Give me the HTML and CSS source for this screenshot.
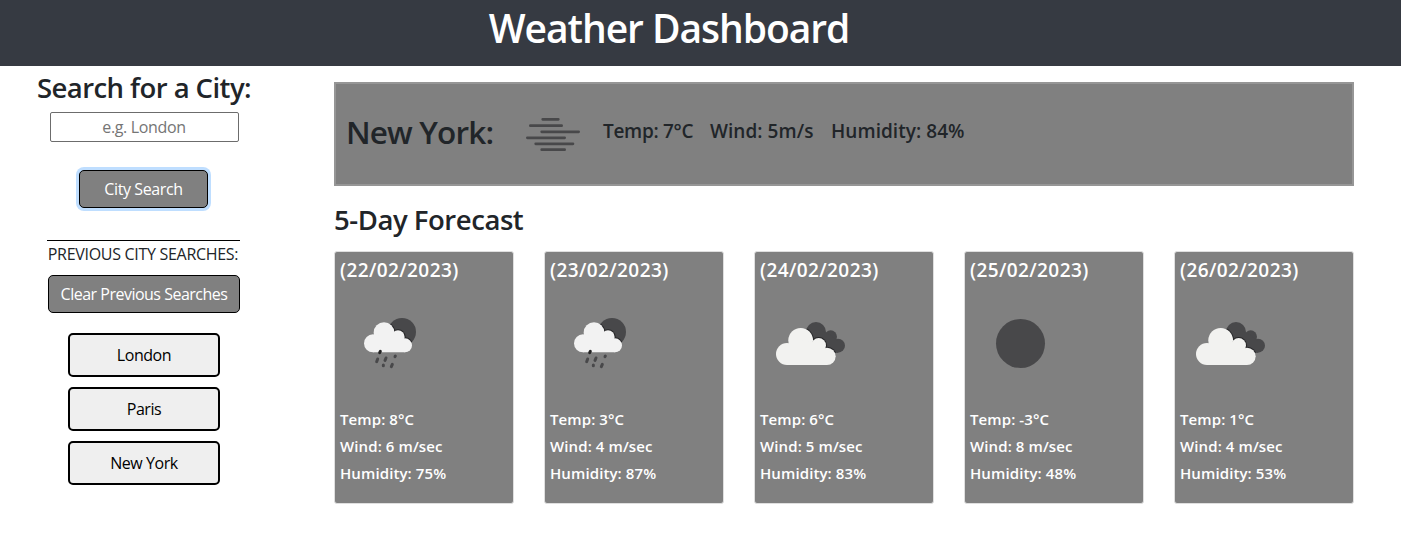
FILE: index.html
```html
<!DOCTYPE html>
<html lang="en">
<head>
<meta charset="utf-8">
<title>Weather Dashboard</title>
<link rel="stylesheet" href="styles.css">
</head>
<body>
<svg class="defs" aria-hidden="true">
  <clipPath id="sun-clip"><circle cx="156" cy="81" r="42"/></clipPath>
  <clipPath id="back-clip"><path d="M108 81a30 30 0 0 1 60 0a19 19 0 0 1 31 21a21 21 0 1 1 5 41h-34l-62-40z"/></clipPath>
  <symbol id="rain" viewBox="0 0 240 225">
    <circle cx="156" cy="81" r="42" fill="#48484a"/>
    <g fill="#262628" clip-path="url(#sun-clip)">
      <circle cx="102" cy="83" r="34"/><circle cx="144" cy="96" r="23"/><circle cx="165" cy="121" r="24"/>
    </g>
    <g fill="#f2f2f2">
      <circle cx="69" cy="115" r="27"/><circle cx="102" cy="83" r="31"/><circle cx="144" cy="96" r="20"/><circle cx="165" cy="121" r="21"/>
      <path d="M69 142V100L102 80L144 92L165 110V142z"/>
    </g>
    <g stroke-linecap="round" stroke-width="9" fill="none" stroke="#48484a">
      <path d="M91 139l-2 4" stroke="#222"/>
      <path d="M83 162l-3 8M108 159l-3 7M136 153l-1 2M100 180l0 2M127 178l-3 7"/>
    </g>
  </symbol>
  <symbol id="clouds" viewBox="0 0 240 225">
    <g fill="#48484a">
      <circle cx="138" cy="81" r="30"/><circle cx="182" cy="95" r="19"/><circle cx="204" cy="122" r="21"/>
      <path d="M110 81L150 75L182 90L204 110V143H180L120 110z"/>
    </g>
    <g fill="#262628" clip-path="url(#back-clip)">
      <circle cx="92" cy="106" r="40"/><circle cx="146" cy="121" r="25"/><circle cx="171" cy="154" r="29"/>
    </g>
    <g fill="#f2f2f0">
      <circle cx="51" cy="147" r="33"/><circle cx="92" cy="106" r="37"/><circle cx="146" cy="121" r="22"/><circle cx="171" cy="154" r="26"/>
      <path d="M51 180V130L92 105L146 118L171 140V180z"/>
    </g>
  </symbol>
  <symbol id="clear" viewBox="0 0 240 225"><circle cx="121.500" cy="115.500" r="73.500" fill="#48484a"/></symbol>
  <symbol id="mist" viewBox="0 0 240 180">
    <path d="M83 43h47M46 62h94M80 80.500h111M37 98.500h112M62 116.500h112M80 134h69" stroke="#48484a" stroke-width="8" stroke-linecap="round"/>
  </symbol>
</svg>
<header class="header"><h1 class="title">Weather Dashboard</h1></header>
<div class="page">
  <aside class="sidebar">
    <h2 class="search-title">Search for a City:</h2>
    <input class="search-input" type="text" placeholder="e.g. London">
    <button class="btn search-btn">City Search</button>
    <div class="previous">PREVIOUS CITY SEARCHES:</div>
    <button class="btn clear-btn">Clear Previous Searches</button>
    <div class="history">
      <button class="city">London</button>
      <button class="city">Paris</button>
      <button class="city">New York</button>
    </div>
  </aside>
  <main class="main">
    <section class="current">
      <h2 class="current-city">New York:</h2>
      <svg class="current-icon"><use href="#mist"/></svg>
      <span class="stat stat-temp">Temp: 7°C</span>
      <span class="stat stat-wind">Wind: 5m/s</span>
      <span class="stat stat-humidity">Humidity: 84%</span>
    </section>
    <h3 class="forecast-title">5-Day Forecast</h3>
    <section class="forecast">
      <article class="card"><h4 class="date">(22/02/2023)</h4><svg class="icon"><use href="#rain"/></svg><p class="line">Temp: 8°C</p><p class="line">Wind: 6 m/sec</p><p class="line">Humidity: 75%</p></article>
      <article class="card"><h4 class="date">(23/02/2023)</h4><svg class="icon"><use href="#rain"/></svg><p class="line">Temp: 3°C</p><p class="line">Wind: 4 m/sec</p><p class="line">Humidity: 87%</p></article>
      <article class="card"><h4 class="date">(24/02/2023)</h4><svg class="icon"><use href="#clouds"/></svg><p class="line">Temp: 6°C</p><p class="line">Wind: 5 m/sec</p><p class="line">Humidity: 83%</p></article>
      <article class="card"><h4 class="date">(25/02/2023)</h4><svg class="icon"><use href="#clear"/></svg><p class="line">Temp: -3°C</p><p class="line">Wind: 8 m/sec</p><p class="line">Humidity: 48%</p></article>
      <article class="card"><h4 class="date">(26/02/2023)</h4><svg class="icon"><use href="#clouds"/></svg><p class="line">Temp: 1°C</p><p class="line">Wind: 4 m/sec</p><p class="line">Humidity: 53%</p></article>
    </section>
  </main>
</div>
</body>
</html>
```
FILE: styles.css
```css
* { box-sizing: border-box; margin: 0; }
body { font-family: "Segoe UI", "Open Sans", "Noto Sans", sans-serif; font-size: 16px; color: #212529; background: #fff; white-space: nowrap; overflow: hidden; }
.defs { display: block; width: 0; height: 0; }
.header { height: 66px; background: #363a42; padding: 4px 63px 0 0; text-align: center; }
.title { font-size: 39px; line-height: 48px; font-weight: 600; color: #fff; letter-spacing: -1.05px; }
.page { display: flex; }
.sidebar { width: 288px; display: flex; flex-direction: column; align-items: center; padding-top: 5px; }
.search-title { font-size: 27.5px; line-height: 34px; font-weight: 600; letter-spacing: -0.55px; }
.search-input { width: 189px; height: 30px; margin-top: 7px; border: 1px solid #6c6c6c; border-radius: 2px; text-align: center; font: inherit; letter-spacing: -0.35px; }
.search-input::placeholder { color: #757575; }
.btn { height: 38px; border: 1px solid #000; border-radius: 5px; background: #808080; color: #fff; font: inherit; padding: 0; letter-spacing: -0.5px; }
.search-btn { width: 129px; margin: 28px 1px 0 0; box-shadow: 0 0 0 3px #bfdeff; letter-spacing: -0.4px; }
.previous { width: 193px; height: 28px; margin: 32px 2px 0 0; border-top: 1px solid #000; text-align: center; line-height: 26px; font-size: 16px; letter-spacing: -0.3px; }
.clear-btn { width: 192px; margin-top: 7px; }
.history { display: grid; gap: 10px; margin-top: 20px; }
.city { width: 152px; height: 44px; border: 2px solid #000; border-radius: 5px; background: #efefef; color: #000; font: inherit; letter-spacing: -0.45px; }
.main { width: 1020px; margin-left: 46px; padding-top: 16px; }
.current { height: 104px; display: flex; align-items: flex-start; border: 2px solid #969696; background: #808080; padding: 20px 10px 0; }
.current-city { width: 169px; font-size: 31.5px; line-height: 55px; font-weight: 600; letter-spacing: -0.85px; }
.current-icon { width: 80px; height: 60px; margin-top: 1px; }
.stat { font-size: 19px; line-height: 54px; font-weight: 600; letter-spacing: 0.05px; }
.stat-temp { width: 107px; margin-left: 8px; letter-spacing: -0.3px; }
.stat-wind { width: 121px; }
.forecast-title { font-size: 27.5px; line-height: 34px; font-weight: 600; margin-top: 17px; letter-spacing: -0.45px; }
.forecast { display: grid; grid-template-columns: repeat(5, 180px); gap: 30px; margin-top: 14px; }
.card { height: 253px; border: 1px solid #dfdfdf; border-radius: 3px; background: #808080; color: #fff; padding: 5px 5px 0; }
.date { font-size: 19px; line-height: 26px; font-weight: 600; letter-spacing: 0.4px; }
.icon { display: block; width: 80px; height: 75px; margin: 22px 0 26px 10px; }
.line { font-size: 15px; line-height: 27px; font-weight: 600; letter-spacing: 0.1px; }
```
